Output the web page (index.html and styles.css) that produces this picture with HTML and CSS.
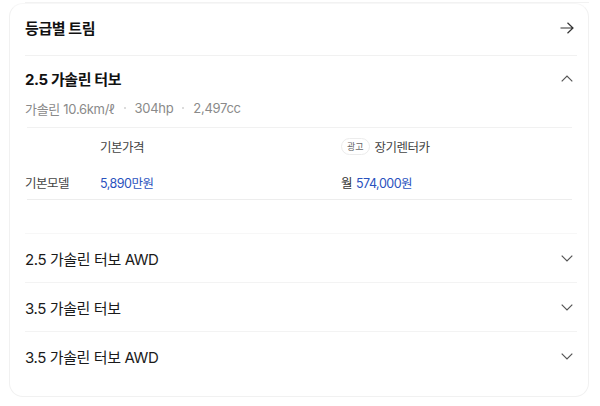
FILE: index.html
```html
<!DOCTYPE html>
<html lang="ko">
<head>
<meta charset="utf-8">
<link rel="stylesheet" href="styles.css">
</head>
<body>
<div class="topline"></div>
<section class="card">
  <header class="card-head">
    <h2 class="title">등급별 트림</h2>
    <svg class="icon-arrow" width="14" height="12" viewBox="0 0 14 12"><path d="M0.5 6H13M7.5 0.8L13 6L7.5 11.2" fill="none" stroke="#333" stroke-width="1.2"/></svg>
  </header>
  <div class="trim open">
    <div class="trim-head">
      <h3 class="trim-name bold">2.5 가솔린 터보</h3>
      <svg class="chev" width="12" height="7" viewBox="0 0 12 7"><path d="M0.7 6.3L6 1L11.3 6.3" fill="none" stroke="#555" stroke-width="1.2"/></svg>
    </div>
    <div class="specs">
      <span>가솔린 10.6km/ℓ</span><i class="dot"></i><span>304hp</span><i class="dot"></i><span>2,497cc</span>
    </div>
    <div class="table">
      <div class="row thead">
        <span class="c1"></span>
        <span class="c2">기본가격</span>
        <span class="c3"><em class="ad">광고</em>장기렌터카</span>
      </div>
      <div class="row tbody">
        <span class="c1">기본모델</span>
        <span class="c2 blue">5,890만원</span>
        <span class="c3"><span class="month">월</span><b class="blue">574,000원</b></span>
      </div>
    </div>
  </div>
  <div class="trim closed">
    <h3 class="trim-name">2.5 가솔린 터보 AWD</h3>
    <svg class="chev" width="12" height="7" viewBox="0 0 12 7"><path d="M0.7 0.7L6 6L11.3 0.7" fill="none" stroke="#555" stroke-width="1.2"/></svg>
  </div>
  <div class="trim closed">
    <h3 class="trim-name">3.5 가솔린 터보</h3>
    <svg class="chev" width="12" height="7" viewBox="0 0 12 7"><path d="M0.7 0.7L6 6L11.3 0.7" fill="none" stroke="#555" stroke-width="1.2"/></svg>
  </div>
  <div class="trim closed last">
    <h3 class="trim-name">3.5 가솔린 터보 AWD</h3>
    <svg class="chev" width="12" height="7" viewBox="0 0 12 7"><path d="M0.7 0.7L6 6L11.3 0.7" fill="none" stroke="#555" stroke-width="1.2"/></svg>
  </div>
</section>
</body>
</html>
```
FILE: styles.css
```css
* { box-sizing: border-box; margin: 0; padding: 0; }
body {
  background: #fff;
  font-family: "Inter", "Noto Sans CJK KR", sans-serif;
  color: #222;
  width: 600px;
  height: 406px;
  overflow: hidden;
}
.topline {
  height: 3px;
  margin: 0 11px 0 25px;
  border-bottom: 1px solid #f2f2f2;
}
.card {
  margin: 0 11px 0 9px;
  height: 394px;
  border: 1px solid #f1f1f1;
  border-top-color: #f7f7f7;
  border-radius: 14px;
  padding: 0 11px 0 15px;
}
.card-head {
  height: 52px;
  border-bottom: 1px solid #f1f1f1;
  display: flex;
  align-items: center;
  justify-content: space-between;
  padding-right: 3px;
  padding-bottom: 4px;
}
.title {
  font-size: 15px;
  font-weight: 700;
  color: #111;
  letter-spacing: -0.4px;
}
.trim-head {
  display: flex;
  align-items: center;
  justify-content: space-between;
  height: 42px;
  padding-top: 3px;
  padding-right: 4px;
}
.trim-name {
  font-size: 15px;
  font-weight: 400;
  color: #1a1a1a;
  letter-spacing: -0.4px;
}
.trim-name.bold { font-weight: 700; color: #111; }
.specs {
  display: flex;
  align-items: center;
  gap: 9px;
  font-size: 13px;
  color: #8a8a8a;
  letter-spacing: -0.3px;
  height: 29px;
  padding-bottom: 9px;
}
.dot {
  width: 2px;
  height: 2px;
  border-radius: 50%;
  background: #d0d0d0;
}
.table {
  border-top: 1px solid #f1f1f1;
  margin-left: 2px;
  margin-right: 5px;
}
.row {
  display: flex;
  align-items: center;
  font-size: 12.5px;
  letter-spacing: -0.5px;
}
.row.thead { height: 37px; color: #444; }
.row.tbody { height: 35px; color: #333; border-bottom: 1px solid #ededed; }
.c1 { width: 75px; margin-left: -2px; color: #444; }
.c2 { width: 241px; }
.c3 { display: flex; align-items: center; }
.month { margin-right: 4px; }
.blue { color: #2a52be; font-weight: 400; }
.ad {
  font-style: normal;
  font-size: 9px;
  color: #666;
  border: 1px solid #ececec;
  border-radius: 9px;
  height: 17px;
  padding: 0 5px;
  display: inline-flex;
  align-items: center;
  margin-right: 5px;
  letter-spacing: 0;
}
.trim.open { border-bottom: 1px solid #f7f7f7; padding-bottom: 33px; }
.trim.closed {
  height: 49px;
  display: flex;
  align-items: center;
  justify-content: space-between;
  padding-right: 4px;
  border-bottom: 1px solid #f3f3f3;
}
.trim.closed.last { border-bottom: none; }
.chev { display: block; }
.icon-arrow { display: block; }
```
